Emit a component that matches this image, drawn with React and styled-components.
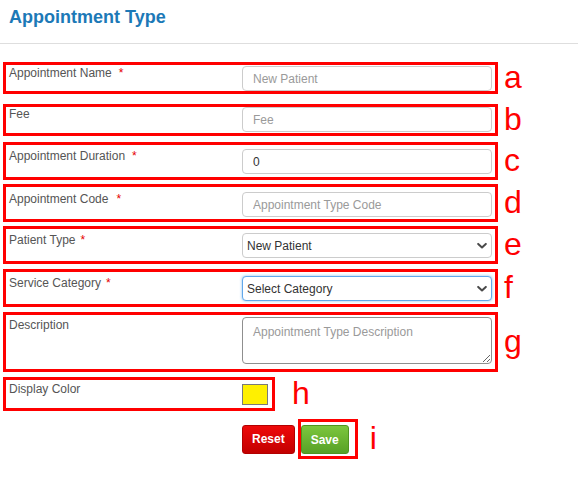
import React from "react";
import styled, { createGlobalStyle } from "styled-components";

const GlobalStyle = createGlobalStyle`
  html, body { margin: 0; padding: 0; background: #fff; }
  body { font-family: "Liberation Sans", Arial, Helvetica, sans-serif; }
  * { box-sizing: border-box; }
`;

const Page = styled.div`
  width: 578px;
  height: 480px;
  overflow: hidden;
  background: #fff;
`;

const Header = styled.div`
  padding: 7px 9px 16px;
  border-bottom: 1px solid #dedede;
`;

const Title = styled.h1`
  margin: 0;
  font-size: 18px;
  line-height: 20px;
  font-weight: 700;
  color: #1c79b7;
`;

const Form = styled.form`
  display: flex;
  flex-direction: column;
  margin: 0;
  padding: 18px 0 0 3px;
`;

/* an annotated line: red frame round the field, letter beside it */
const Row = styled.div`
  display: flex;
  align-items: center;
  margin-top: ${(p) => p.$mt ?? 0}px;
`;

const Frame = styled.div`
  display: flex;
  align-items: flex-start;
  flex: none;
  width: ${(p) => p.$w ?? 495}px;
  padding: ${(p) => p.$pt}px ${(p) => p.$pr ?? 3}px ${(p) => p.$pb}px ${(p) => p.$pl ?? 3}px;
  border: 3px solid #f00;
`;

const Tag = styled.span`
  flex: none;
  margin: -6px 0 -4px ${(p) => p.$dx ?? 6}px;
  font-size: 32px;
  line-height: 1;
  color: #f00;
`;

const Label = styled.label`
  flex: none;
  width: 233px;
  font-size: 12px;
  line-height: 14px;
  color: #555;
`;

const Req = styled.span`
  color: #e60000;
  margin-left: ${(p) => p.$gap}px;
`;

const TextInput = styled.input`
  flex: none;
  width: 250px;
  height: 25px;
  padding: 0 10px;
  border: 1px solid #ccc;
  border-radius: 4px;
  font-family: inherit;
  font-size: 12px;
  color: #333;
  background: #fff;
  outline: none;
  &::placeholder { color: #9a9a9a; }
`;

const SelectWrap = styled.div`
  position: relative;
  flex: none;
  width: 250px;
  height: 25px;
`;

const Select = styled.select`
  appearance: none;
  -webkit-appearance: none;
  width: 100%;
  height: 100%;
  padding: 0 20px 0 4px;
  border: 1px solid ${(p) => (p.$focus ? "#62a8ea" : "#ccc")};
  border-radius: 4px;
  box-shadow: ${(p) => (p.$focus ? "0 0 3px rgba(102,175,233,0.8)" : "none")};
  font-family: inherit;
  font-size: 12px;
  color: #333;
  background: #fff;
  outline: none;
`;

const Chevron = styled.svg`
  position: absolute;
  right: 5px;
  top: 50%;
  transform: translateY(-50%);
  pointer-events: none;
`;

const TextArea = styled.textarea`
  flex: none;
  width: 250px;
  height: 47px;
  margin-top: -1px;
  padding: 7px 10px;
  border: 1px solid #8f8f8f;
  border-radius: 4px;
  font-family: inherit;
  font-size: 12px;
  line-height: 14px;
  color: #333;
  outline: none;
  &::placeholder { color: #9a9a9a; }
`;

const Swatch = styled.span`
  display: block;
  flex: none;
  margin-top: 2px;
  width: 26px;
  height: 21px;
  border: 1px solid #7a7a7a;
  background: ${(p) => p.$color};
`;

const ButtonRow = styled.div`
  display: flex;
  align-items: center;
  margin-top: 8px;
  padding-left: 239px;
`;

const Button = styled.button`
  flex: none;
  height: 29px;
  padding: 0 9px;
  border-radius: 3px;
  border: 1px solid ${(p) => (p.$variant === "danger" ? "#b30000" : "#4f9420")};
  background: ${(p) =>
    p.$variant === "danger"
      ? "linear-gradient(#ee0a0a, #c20000)"
      : "linear-gradient(#7cc63e, #58a126)"};
  color: #fff;
  font-family: inherit;
  font-size: 12px;
  font-weight: 700;
  cursor: pointer;
`;

const ButtonFrame = styled.div`
  display: flex;
  margin-left: 3px;
  padding: 3px 6px 2px 0;
  border: 3px solid #f00;
`;

const ChevronIcon = () => (
  <Chevron width="10" height="7" viewBox="0 0 10 7">
    <path d="M1.2 1.4 L5 5 L8.8 1.4" fill="none" stroke="#4a4a4a" strokeWidth="2" strokeLinecap="round" strokeLinejoin="round" />
  </Chevron>
);

export default function App() {
  return (
    <>
      <GlobalStyle />
      <Page>
        <Header>
          <Title>Appointment Type</Title>
        </Header>
        <Form onSubmit={(e) => e.preventDefault()}>
          <Row>
            <Frame $pt={1} $pb={0}>
              <Label>Appointment Name<Req $gap={7}>*</Req></Label>
              <TextInput placeholder="New Patient" />
            </Frame>
            <Tag>a</Tag>
          </Row>
          <Row $mt={10}>
            <Frame $pt={0} $pb={1}>
              <Label>Fee</Label>
              <TextInput placeholder="Fee" />
            </Frame>
            <Tag>b</Tag>
          </Row>
          <Row $mt={6}>
            <Frame $pt={4} $pb={3}>
              <Label>Appointment Duration<Req $gap={7}>*</Req></Label>
              <TextInput defaultValue="0" />
            </Frame>
            <Tag>c</Tag>
          </Row>
          <Row $mt={4}>
            <Frame $pt={5} $pb={2}>
              <Label>Appointment Code<Req $gap={8}>*</Req></Label>
              <TextInput placeholder="Appointment Type Code" />
            </Frame>
            <Tag>d</Tag>
          </Row>
          <Row $mt={4}>
            <Frame $pt={4} $pb={3}>
              <Label>Patient Type<Req $gap={5}>*</Req></Label>
              <SelectWrap>
                <Select defaultValue="new">
                  <option value="new">New Patient</option>
                  <option value="existing">Existing Patient</option>
                </Select>
                <ChevronIcon />
              </SelectWrap>
            </Frame>
            <Tag>e</Tag>
          </Row>
          <Row $mt={5}>
            <Frame $pt={4} $pb={3}>
              <Label>Service Category<Req $gap={5}>*</Req></Label>
              <SelectWrap>
                <Select $focus defaultValue="">
                  <option value="">Select Category</option>
                </Select>
                <ChevronIcon />
              </SelectWrap>
            </Frame>
            <Tag>f</Tag>
          </Row>
          <Row $mt={5}>
            <Frame $pt={3} $pb={5}>
              <Label>Description</Label>
              <TextArea placeholder="Appointment Type Description" />
            </Frame>
            <Tag>g</Tag>
          </Row>
          <Row $mt={5}>
            <Frame $w={272} $pt={2} $pb={3} $pr={4}>
              <Label>Display Color</Label>
              <Swatch $color="#fff000" />
            </Frame>
            <Tag $dx={17}>h</Tag>
          </Row>
          <ButtonRow>
            <Button type="button" $variant="danger">Reset</Button>
            <ButtonFrame>
              <Button type="submit" $variant="success">Save</Button>
            </ButtonFrame>
            <Tag $dx={12}>i</Tag>
          </ButtonRow>
        </Form>
      </Page>
    </>
  );
}
